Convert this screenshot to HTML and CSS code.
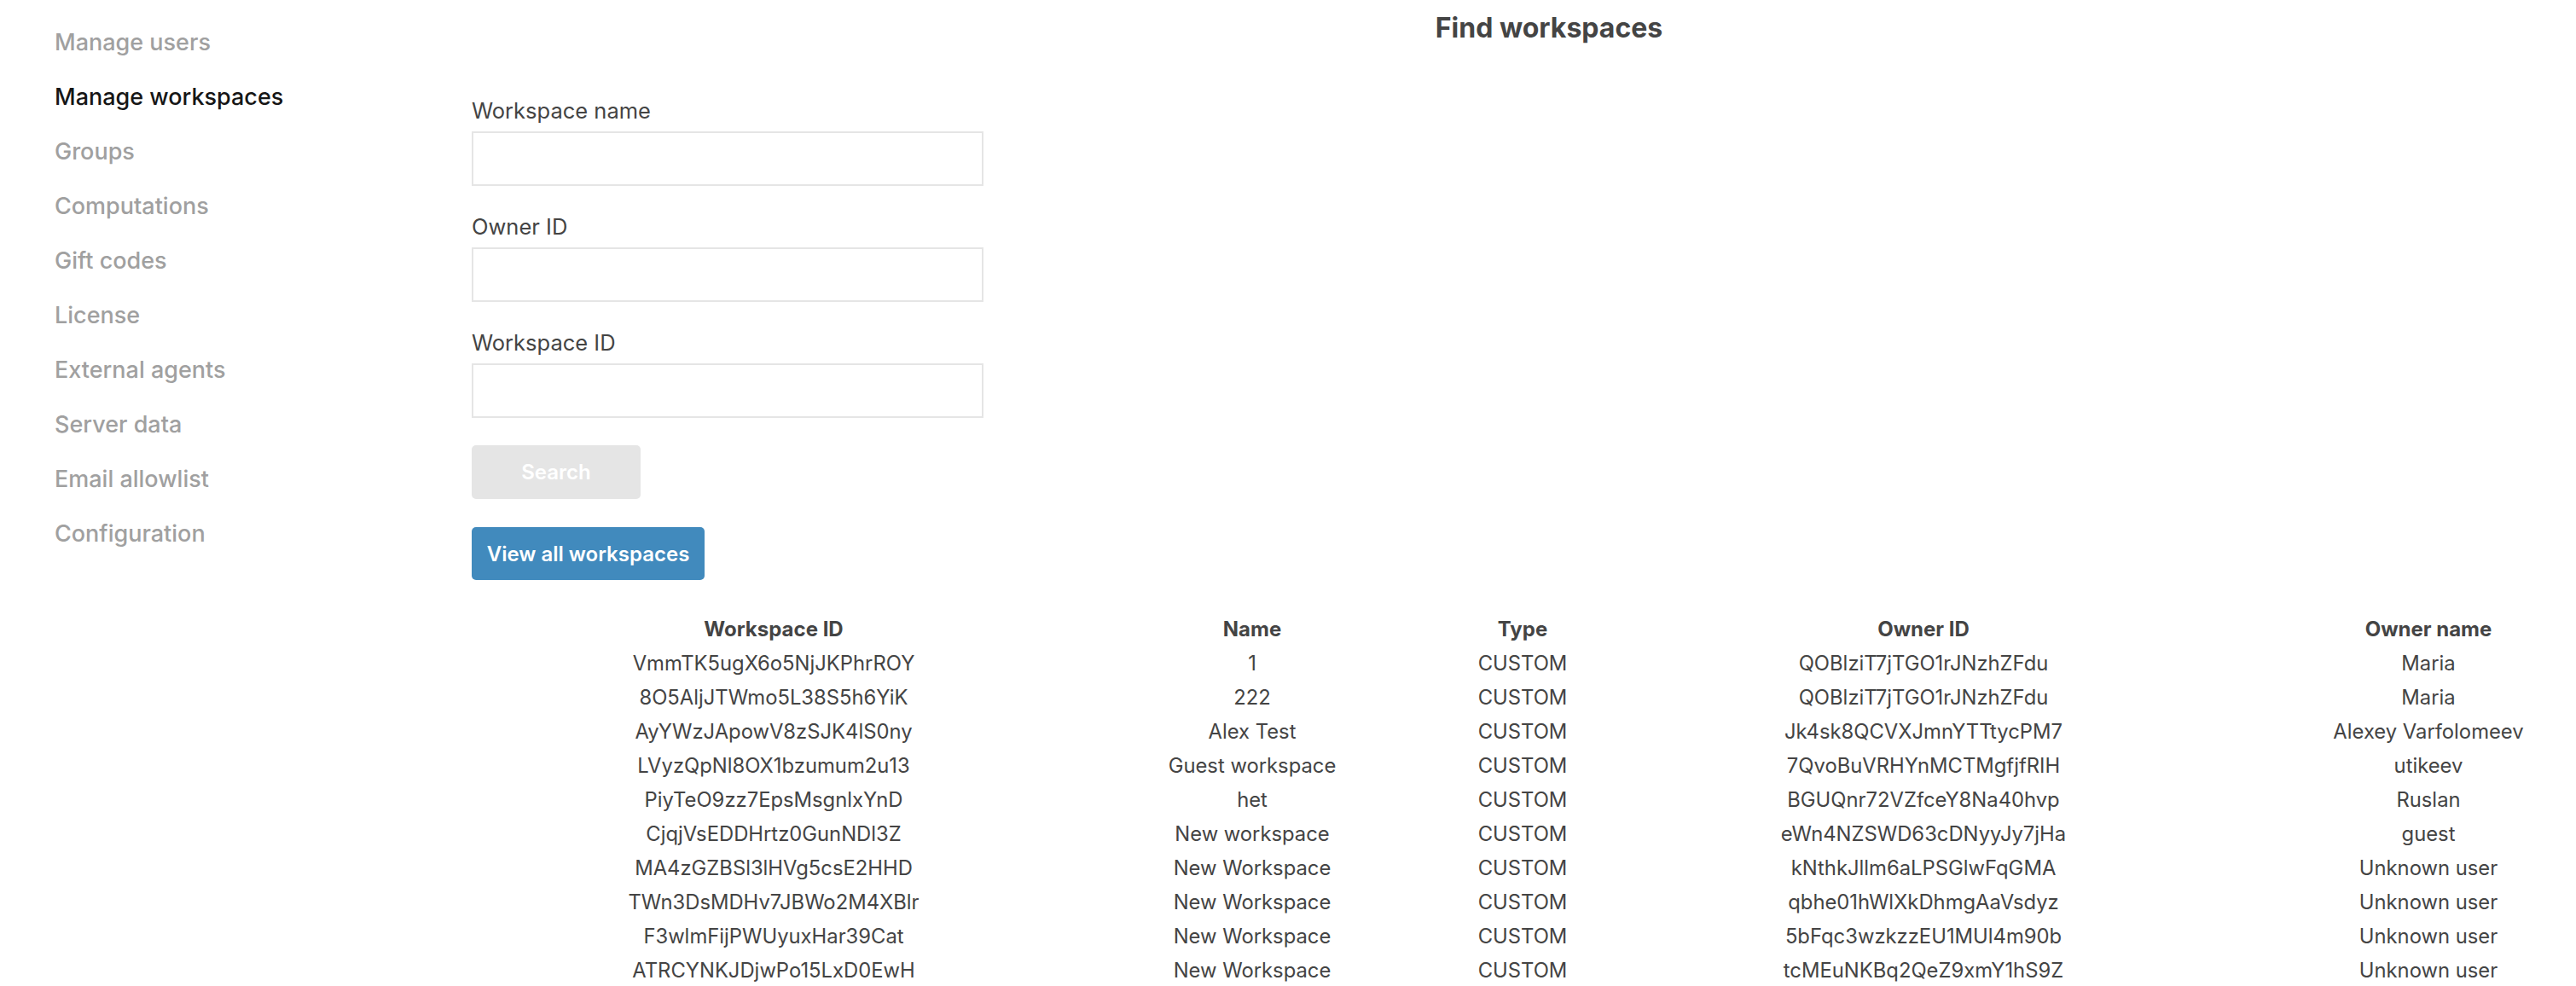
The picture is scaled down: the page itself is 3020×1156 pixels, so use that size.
FILE: index.html
```html
<!DOCTYPE html>
<html lang="en">
<head>
<meta charset="utf-8">
<title>Find workspaces</title>
<link rel="stylesheet" href="styles.css">
</head>
<body>
<div class="page">
  <nav class="sidebar">
    <a class="nav-item">Manage users</a>
    <a class="nav-item active">Manage workspaces</a>
    <a class="nav-item">Groups</a>
    <a class="nav-item">Computations</a>
    <a class="nav-item">Gift codes</a>
    <a class="nav-item">License</a>
    <a class="nav-item">External agents</a>
    <a class="nav-item">Server data</a>
    <a class="nav-item">Email allowlist</a>
    <a class="nav-item">Configuration</a>
  </nav>
  <main class="main">
    <h1 class="title">Find workspaces</h1>
    <form class="form">
      <div class="field">
        <label class="label">Workspace name</label>
        <input class="input" type="text">
      </div>
      <div class="field">
        <label class="label">Owner ID</label>
        <input class="input" type="text">
      </div>
      <div class="field">
        <label class="label">Workspace ID</label>
        <input class="input" type="text">
      </div>
      <button type="button" class="btn btn-disabled">Search</button>
      <button type="button" class="btn btn-primary">View all workspaces</button>
    </form>
    <table class="table">
      <colgroup>
        <col class="c1"><col class="c2"><col class="c3"><col class="c4"><col class="c5">
      </colgroup>
      <thead>
        <tr><th>Workspace ID</th><th>Name</th><th>Type</th><th>Owner ID</th><th>Owner name</th></tr>
      </thead>
      <tbody>
        <tr><td>VmmTK5ugX6o5NjJKPhrROY</td><td>1</td><td>CUSTOM</td><td>QOBlziT7jTGO1rJNzhZFdu</td><td>Maria</td></tr>
        <tr><td>8O5AljJTWmo5L38S5h6YiK</td><td>222</td><td>CUSTOM</td><td>QOBlziT7jTGO1rJNzhZFdu</td><td>Maria</td></tr>
        <tr><td>AyYWzJApowV8zSJK4lS0ny</td><td>Alex Test</td><td>CUSTOM</td><td>Jk4sk8QCVXJmnYTTtycPM7</td><td>Alexey Varfolomeev</td></tr>
        <tr><td>LVyzQpNl8OX1bzumum2u13</td><td>Guest workspace</td><td>CUSTOM</td><td>7QvoBuVRHYnMCTMgfjfRIH</td><td>utikeev</td></tr>
        <tr><td>PiyTeO9zz7EpsMsgnlxYnD</td><td>het</td><td>CUSTOM</td><td>BGUQnr72VZfceY8Na40hvp</td><td>Ruslan</td></tr>
        <tr><td>CjqjVsEDDHrtz0GunNDl3Z</td><td>New workspace</td><td>CUSTOM</td><td>eWn4NZSWD63cDNyyJy7jHa</td><td>guest</td></tr>
        <tr><td>MA4zGZBSl3lHVg5csE2HHD</td><td>New Workspace</td><td>CUSTOM</td><td>kNthkJllm6aLPSGlwFqGMA</td><td>Unknown user</td></tr>
        <tr><td>TWn3DsMDHv7JBWo2M4XBlr</td><td>New Workspace</td><td>CUSTOM</td><td>qbhe01hWlXkDhmgAaVsdyz</td><td>Unknown user</td></tr>
        <tr><td>F3wlmFijPWUyuxHar39Cat</td><td>New Workspace</td><td>CUSTOM</td><td>5bFqc3wzkzzEU1MUl4m90b</td><td>Unknown user</td></tr>
        <tr><td>ATRCYNKJDjwPo15LxD0EwH</td><td>New Workspace</td><td>CUSTOM</td><td>tcMEuNKBq2QeZ9xmY1hS9Z</td><td>Unknown user</td></tr>
      </tbody>
    </table>
  </main>
</div>
</body>
</html>
```

FILE: styles.css
```css
html, body {
  margin: 0;
  padding: 0;
  background: #ffffff;
  overflow: hidden;
}

body {
  font-family: Inter, "Liberation Sans", sans-serif;
  color: #444444;
}

.page {
  display: flex;
  align-items: flex-start;
  width: 3087px;
}

.sidebar {
  display: flex;
  flex-direction: column;
  width: 481px;
  flex-shrink: 0;
  padding: 18px 0 0 64px;
}

.nav-item {
  font-size: 27px;
  font-weight: 500;
  line-height: 64px;
  color: #a0a0a0;
  text-decoration: none;
  white-space: nowrap;
}

.nav-item.active {
  color: #161616;
}

.main {
  width: 2542px;
  flex-shrink: 0;
  display: flex;
  flex-direction: column;
}

.title {
  margin: 13px 0 0;
  font-size: 32px;
  line-height: 40px;
  font-weight: 700;
  text-align: center;
  color: #444444;
}

.form {
  display: flex;
  flex-direction: column;
  align-items: flex-start;
  padding-left: 8px;
  margin-top: 61px;
}

.field {
  display: flex;
  flex-direction: column;
  margin-bottom: 32px;
}

.label {
  font-size: 25.5px;
  line-height: 32px;
  color: #444444;
  margin-bottom: 8px;
}

.input {
  box-sizing: border-box;
  width: 600px;
  height: 64px;
  margin: 0;
  border: 2px solid #e5e5e5;
  border-radius: 0;
  background: #ffffff;
  outline: none;
  font-family: inherit;
}

.btn {
  box-sizing: border-box;
  height: 63px;
  margin: 0;
  border: none;
  border-radius: 5px;
  font-family: inherit;
  font-size: 24px;
  font-weight: 600;
  color: #ffffff;
  padding: 0 16px;
}

.btn-disabled {
  width: 198px;
  background: #e5e5e5;
  margin-bottom: 33px;
}

.btn-primary {
  width: 273px;
  background: #418abd;
  height: 62px;
}

.table {
  margin-top: 38px;
  width: 2542px;
  table-layout: fixed;
  border-collapse: collapse;
  color: #444444;
}

.c1 { width: 724px; }
.c2 { width: 398px; }
.c3 { width: 236px; }
.c4 { width: 704px; }
.c5 { width: 480px; }

.table th,
.table td {
  padding: 0;
  height: 40px;
  line-height: 40px;
  text-align: center;
  white-space: nowrap;
}

.table th {
  font-size: 24px;
  font-weight: 700;
}

.table td {
  font-size: 23.8px;
  font-weight: 400;
}
```
